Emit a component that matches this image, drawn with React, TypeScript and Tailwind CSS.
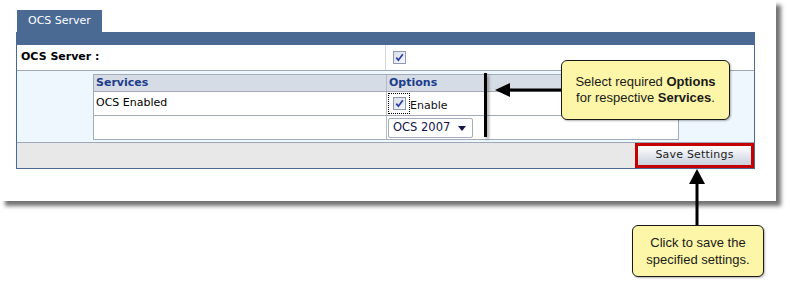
import React from "react";

const Check = () => (
  <div className="flex h-[13px] w-[13px] items-center justify-center border border-[#8f9bb0] bg-gradient-to-br from-[#d9dee7] to-[#f7f8fa]">
    <svg width="9" height="9" viewBox="0 0 9 9">
      <path d="M1.3 4.6 L3.4 7.2 L7.8 1.2" stroke="#2a3da6" strokeWidth="1.7" fill="none" />
    </svg>
  </div>
);

export default function App() {
  return (
    <div className="relative h-[299px] w-[790px] overflow-hidden bg-white font-['DejaVu_Sans',sans-serif] text-[11px] text-black">
      {/* screenshot card */}
      <div className="h-[201px] w-[776px] bg-white pl-[16px] pt-[10px] shadow-[5px_5px_4px_rgba(0,0,0,0.55)]">
        <div className="ml-[1px] h-[22px] w-[85px] bg-[#4a6a94] pl-[11px] leading-[22px] text-white">OCS Server</div>
        <div className="w-[739px] border-x border-b border-[#4a6a94]">
          <div className="h-[13px] bg-[#4a6a94]" />

          <div className="flex h-[26px] border-b border-[#9ea8b8]">
            <div className="flex w-[369px] items-center border-r border-[#d3d7de] pl-[4px] font-bold">OCS Server :</div>
            <div className="flex items-center pl-[7px]">
              <Check />
            </div>
          </div>

          <div className="bg-[#eef6fe] pb-[2px] pl-[76px] pt-[3px]">
            <div className="w-[586px] border border-[#a3abb8] bg-white">
              <div className="flex h-[17px] border-b border-[#a3abb8] bg-[#d5dce6] font-bold text-[#1c3d8c]">
                <div className="flex w-[293px] items-center border-r border-[#b4bcc8] pl-[2px]">Services</div>
                <div className="flex items-center pl-[2px]">Options</div>
              </div>
              <div className="flex h-[24px] border-b border-[#a3abb8]">
                <div className="flex w-[293px] items-center border-r border-[#b4bcc8] pl-[2px]">OCS Enabled</div>
                <div className="flex items-center pl-[1px]">
                  <div className="flex h-[21px] w-[22px] items-center justify-center border border-dotted border-black">
                    <Check />
                  </div>
                  <span className="mt-[5px] text-[#111]">Enable</span>
                </div>
              </div>
              <div className="flex h-[23px]">
                <div className="w-[293px] border-r border-[#b4bcc8]" />
                <div className="pl-[1px] pt-[2px]">
                  <div className="flex h-[20px] w-[85px] items-center justify-between rounded-[2px] border border-[#a5adb8] bg-white pl-[4px] pr-[6px] text-[11.5px] text-[#15154a]">
                    <span>OCS 2007</span>
                    <svg width="8" height="5" viewBox="0 0 8 5">
                      <polygon points="0,0 8,0 4,5" fill="#15154a" />
                    </svg>
                  </div>
                </div>
              </div>
            </div>
          </div>

          <div className="flex h-[26px] justify-end border-t border-[#9ea8b8] bg-[#e8e8e8]">
            <div className="h-[25px] w-[119px] border-[3px] border-[#c40000]">
              <div className="flex h-full items-center justify-center bg-gradient-to-b from-white to-[#c9d1de] tracking-[0.2px] text-[#222]">
                Save Settings
              </div>
            </div>
          </div>
        </div>
      </div>

      {/* annotations */}
      <div className="absolute left-[484px] top-[73px] h-[64px] w-[3px] bg-black shadow-[2px_2px_3px_rgba(0,0,0,0.35)]" />
      <svg className="absolute left-[494px] top-[82px]" width="68" height="16" viewBox="0 0 68 16">
        <polygon points="1,8 16,1 16,15" fill="#000" />
        <rect x="14" y="6.5" width="54" height="3" fill="#000" />
      </svg>
      <div className="absolute left-[561px] top-[60px] flex h-[60px] w-[169px] flex-col items-center justify-center rounded-[6px] border-[1.5px] border-[#1a1a1a] bg-[#fdf6a8] font-['Liberation_Sans',Arial,sans-serif] text-[13px] leading-[16px] text-[#1a1a1a] shadow-[1px_1px_2px_rgba(0,0,0,0.3)]">
        <div>
          Select required <b>Options</b>
        </div>
        <div>
          for respective <b>Services</b>.
        </div>
      </div>

      <svg className="absolute left-[688px] top-[168px]" width="18" height="58" viewBox="0 0 18 58">
        <polygon points="9,1 1,16 17,16" fill="#000" />
        <rect x="7.5" y="14" width="3" height="44" fill="#000" />
      </svg>
      <div className="absolute left-[632px] top-[225px] flex h-[52px] w-[132px] flex-col items-center justify-center rounded-[6px] border-[1.5px] border-[#1a1a1a] bg-[#fdf6a8] font-['Liberation_Sans',Arial,sans-serif] text-[13px] leading-[17px] text-[#1a1a1a] shadow-[1px_1px_2px_rgba(0,0,0,0.3)]">
        <div>Click to save the</div>
        <div>specified settings.</div>
      </div>
    </div>
  );
}
